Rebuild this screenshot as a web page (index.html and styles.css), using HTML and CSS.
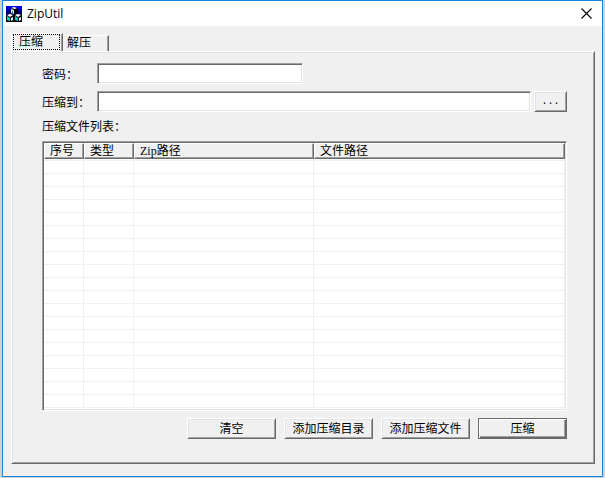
FILE: index.html
```html
<!DOCTYPE html>
<html lang="zh-CN">
<head>
    <meta charset="UTF-8">
    <meta name="viewport" content="width=device-width, initial-scale=1.0">
    <title>ZipUtil</title>
    <link rel="stylesheet" href="styles.css">
</head>
<body>

    <div class="window">
        <header class="title-bar">
            <svg class="app-icon" viewBox="0 0 16 16" aria-hidden="true">
                <rect width="16" height="16" fill="#000"/>
                <rect width="16" height="3" fill="#0000e0"/>
                <rect y="3" width="16" height="3" fill="#0000a0"/>
                <rect y="6" width="16" height="3" fill="#000060"/>
                <path d="M5 2l4-1 3 2v5l-3 1-4-2z" fill="#000"/>
                <path d="M5 2l3-1 3 1-2 1z" fill="#fff"/>
                <path d="M5 3l3 1v4l-3-1z" fill="#e0f0f0"/>
                <path d="M6 5h1v3h-1z" fill="#008080"/>
                <path d="M0 10l4-2 4 2v4l-4 2-4-2z" fill="#000"/>
                <path d="M1 9l3-1 3 1-3 2z" fill="#fff"/>
                <path d="M1 10l3 2v3l-3-1z" fill="#00d0d0"/>
                <path d="M5 12l2-1v3l-2 1z" fill="#e0f0f0"/>
                <path d="M8 10l4-2 4 2v4l-4 2-4-2z" fill="#000"/>
                <path d="M9 9l3-1 3 1-3 2z" fill="#fff"/>
                <path d="M9 10l3 2v3l-3-1z" fill="#00d0d0"/>
                <path d="M13 12l2-1v3l-2 1z" fill="#e0f0f0"/>
            </svg>
            <h1>ZipUtil</h1>
            <button type="button" class="close" aria-label="关闭">
                <svg viewBox="0 0 11 11" aria-hidden="true">
                    <path d="M0.5 0.5l10 10M10.5 0.5l-10 10" stroke="#000" stroke-width="1.1"/>
                </svg>
            </button>
        </header>

        <main class="client">
            <div class="tabs" role="tablist">
                <button type="button" class="tab active" role="tab" aria-selected="true"><span>压缩</span></button>
                <button type="button" class="tab" role="tab" aria-selected="false"><span>解压</span></button>
            </div>

            <form class="panel">
                <div class="field">
                    <label for="password">密码：</label>
                    <input type="password" id="password" name="password" class="short">
                </div>
                <div class="field">
                    <label for="target">压缩到：</label>
                    <input type="text" id="target" name="target">
                    <button type="button" class="btn browse">...</button>
                </div>

                <p class="list-label" id="listLabel">压缩文件列表：</p>
                <div class="list">
                    <table aria-labelledby="listLabel">
                        <colgroup>
                            <col class="col-no">
                            <col class="col-type">
                            <col class="col-zip">
                            <col>
                        </colgroup>
                        <thead>
                            <tr><th>序号</th><th>类型</th><th>Zip路径</th><th>文件路径</th></tr>
                        </thead>
                        <tbody>
                            <tr class="spacer"><td></td><td></td><td></td><td></td></tr>
                            <tr><td></td><td></td><td></td><td></td></tr>
                            <tr><td></td><td></td><td></td><td></td></tr>
                            <tr><td></td><td></td><td></td><td></td></tr>
                            <tr><td></td><td></td><td></td><td></td></tr>
                            <tr><td></td><td></td><td></td><td></td></tr>
                            <tr><td></td><td></td><td></td><td></td></tr>
                            <tr><td></td><td></td><td></td><td></td></tr>
                            <tr><td></td><td></td><td></td><td></td></tr>
                            <tr><td></td><td></td><td></td><td></td></tr>
                            <tr><td></td><td></td><td></td><td></td></tr>
                            <tr><td></td><td></td><td></td><td></td></tr>
                            <tr><td></td><td></td><td></td><td></td></tr>
                            <tr><td></td><td></td><td></td><td></td></tr>
                            <tr><td></td><td></td><td></td><td></td></tr>
                            <tr><td></td><td></td><td></td><td></td></tr>
                            <tr><td></td><td></td><td></td><td></td></tr>
                            <tr><td></td><td></td><td></td><td></td></tr>
                            <tr><td></td><td></td><td></td><td></td></tr>
                            <tr><td></td><td></td><td></td><td></td></tr>
                        </tbody>
                    </table>
                </div>

                <div class="actions">
                    <button type="button" class="btn">清空</button>
                    <button type="button" class="btn">添加压缩目录</button>
                    <button type="button" class="btn">添加压缩文件</button>
                    <button type="submit" class="btn default">压缩</button>
                </div>
            </form>
        </main>
    </div>

</body>
</html>
```

FILE: styles.css
```css
* {
    box-sizing: border-box;
}

body {
    margin: 0;
    padding: 0 2px 2px;
    background-color: #d2d2d2;
    color: #000;
    font-family: "Liberation Serif", "Noto Sans CJK SC", serif;
    font-size: 12px;
    line-height: 16px;
}

button, input {
    font: inherit;
    color: inherit;
    border-radius: 0;
}

.window {
    border: 1px solid #1883d7;
    background-color: #f0f0f0;
}

/* title bar */
.title-bar {
    display: flex;
    align-items: center;
    height: 25px;
    padding: 0 10px 0 3px;
    background-color: #fff;
}

.app-icon {
    width: 16px;
    height: 16px;
}

h1 {
    flex: 1;
    margin: 0 0 0 5px;
    font-family: "Open Sans", sans-serif;
    font-size: 12px;
    font-weight: normal;
}

.close {
    display: flex;
    padding: 0;
    border: none;
    background: none;
}

.close svg {
    width: 11px;
    height: 11px;
}

.client {
    padding: 7px 7px 12px 8px;
}

/* tabs */
.tabs {
    display: flex;
    align-items: flex-end;
}

.tab {
    width: 46px;
    height: 16px;
    padding: 0 0 0 4px;
    border: none;
    border-top: 1px solid #fff;
    border-right: 1px solid #696969;
    box-shadow: inset -1px 0 #a0a0a0;
    background-color: #f0f0f0;
    line-height: 15px;
    text-align: left;
}

.tab.active {
    width: 52px;
    height: 18px;
    padding: 0 2px 1px 1px;
    border-left: 1px solid #fff;
}

.tab.active span {
    display: block;
    height: 16px;
    padding-left: 5px;
    border: 1px dotted #000;
    line-height: 14px;
}

.panel {
    padding: 11px 27px 24px 30px;
    border: 1px solid;
    border-color: #fff #696969 #696969 #fff;
    box-shadow: inset 1px 1px #e3e3e3, inset -1px -1px #a0a0a0;
}

/* fields */
.field {
    display: flex;
    align-items: center;
    margin-bottom: 7px;
}

.field label {
    width: 55px;
    padding-top: 2px;
}

.field input {
    flex: 1;
    min-width: 0;
    height: 21px;
    padding: 0 3px;
    border: 1px solid;
    border-color: #a0a0a0 #fff #fff #a0a0a0;
    box-shadow: inset 1px 1px #696969, inset -1px -1px #e3e3e3;
    background-color: #fff;
    outline: none;
}

.field .short {
    flex: none;
    width: 206px;
}

.list-label {
    margin: 0 0 6px;
}

/* file list */
.list {
    padding: 1px 1px 2px;
    border: 1px solid;
    border-color: #a0a0a0 #fff #fff #a0a0a0;
    box-shadow: inset 1px 1px #696969, inset -1px -1px #e3e3e3;
    background-color: #fff;
}

table {
    width: 100%;
    table-layout: fixed;
    border-collapse: separate;
    border-spacing: 0;
}

.col-no {
    width: 40px;
}

.col-type {
    width: 50px;
}

.col-zip {
    width: 180px;
}

th {
    height: 16px;
    padding: 0 5px;
    border: 1px solid;
    border-color: #fff #696969 #696969 #fff;
    box-shadow: inset -1px -1px #a0a0a0;
    background-color: #f0f0f0;
    font-weight: normal;
    line-height: 14px;
    text-align: left;
    white-space: nowrap;
}

td {
    height: 13px;
    padding: 0;
    border-right: 1px solid #f0f0f0;
    border-bottom: 1px solid #f0f0f0;
}

.spacer td {
    height: 2px;
}

/* buttons */
.btn {
    height: 21px;
    padding: 0;
    border: 1px solid;
    border-color: #fff #696969 #696969 #fff;
    box-shadow: inset 1px 1px #e3e3e3, inset -1px -1px #a0a0a0;
    background-color: #f0f0f0;
    line-height: 16px;
}

.browse {
    width: 33px;
    margin-left: 3px;
    font-family: "Liberation Mono", monospace;
    font-size: 10px;
}

.actions {
    display: flex;
    justify-content: flex-end;
    gap: 8px;
    margin-top: 7px;
}

.actions .btn {
    width: 89px;
}

.btn.default {
    border-color: #696969;
    box-shadow: inset 1px 1px #fff, inset -1px -1px #696969, inset -2px -2px #a0a0a0;
}
```
